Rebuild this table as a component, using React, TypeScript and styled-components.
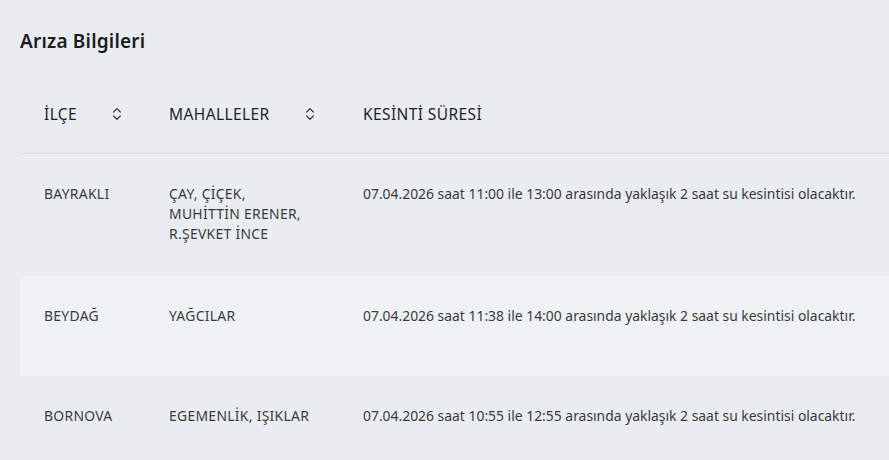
import React from "react";
import styled, { createGlobalStyle } from "styled-components";
import { ChevronsUpDown } from "lucide-react";

const Global = createGlobalStyle`
  html, body { margin: 0; padding: 0; background: #e9edf1; }
  body { font-family: "Noto Sans", "Open Sans", sans-serif; color: #2b2b2b; }
`;

const Page = styled.div`
  padding: 27px 0 0 20px;
  min-height: 460px;
  box-sizing: border-box;
  background: #e9edf1;
`;

const Title = styled.h1`
  margin: 0;
  font-size: 19px;
  line-height: 28px;
  font-weight: 600;
  letter-spacing: 0.2px;
  color: #1c1c1c;
`;

const Table = styled.div`
  margin-top: 19px;
  display: flex;
  flex-direction: column;
`;

const Row = styled.div<{ $header?: boolean; $alt?: boolean }>`
  display: grid;
  grid-template-columns: 125px 194px 1fr;
  padding-left: 24px;
  box-sizing: border-box;
  background: ${(p) => (p.$alt ? "#eff2f5" : "transparent")};
  ${(p) =>
    p.$header
      ? `height: 80px; align-items: center; border-bottom: 1px solid #d8dce1;`
      : `min-height: 100px; align-items: start; padding-top: 30px; padding-bottom: 32px;`}
`;

const HeadCell = styled.div`
  display: flex;
  align-items: center;
  font-size: 15.5px;
  font-weight: 400;
  letter-spacing: 0.4px;
  color: #1f1f1f;
`;

const HeadLabel = styled.span<{ $w?: number }>`
  width: ${(p) => (p.$w ? `${p.$w}px` : "auto")};
`;

const SortIcon = styled(ChevronsUpDown)`
  color: #333;
  flex: none;
`;

const Cell = styled.div<{ $caps?: boolean }>`
  font-size: 13.9px;
  line-height: 20px;
  color: #3a3a3a;
  letter-spacing: ${(p) => (p.$caps ? "0.3px" : "0")};
  padding-right: 10px;
`;

const rows = [
  {
    ilce: "BAYRAKLI",
    mah: ["ÇAY, ÇİÇEK,", "MUHİTTİN ERENER,", "R.ŞEVKET İNCE"],
    desc: "07.04.2026 saat 11:00 ile 13:00 arasında yaklaşık 2 saat su kesintisi olacaktır.",
  },
  {
    ilce: "BEYDAĞ",
    mah: ["YAĞCILAR"],
    desc: "07.04.2026 saat 11:38 ile 14:00 arasında yaklaşık 2 saat su kesintisi olacaktır.",
  },
  {
    ilce: "BORNOVA",
    mah: ["EGEMENLİK, IŞIKLAR"],
    desc: "07.04.2026 saat 10:55 ile 12:55 arasında yaklaşık 2 saat su kesintisi olacaktır.",
  },
];

export default function App() {
  return (
    <Page>
      <Global />
      <Title>Arıza Bilgileri</Title>
      <Table>
        <Row $header>
          <HeadCell>
            <HeadLabel $w={65}>İLÇE</HeadLabel>
            <SortIcon size={16} strokeWidth={1.8} />
          </HeadCell>
          <HeadCell>
            <HeadLabel $w={133}>MAHALLELER</HeadLabel>
            <SortIcon size={16} strokeWidth={1.8} />
          </HeadCell>
          <HeadCell>
            <HeadLabel>KESİNTİ SÜRESİ</HeadLabel>
          </HeadCell>
        </Row>
        {rows.map((r, i) => (
          <Row key={r.ilce} $alt={i === 1}>
            <Cell $caps>{r.ilce}</Cell>
            <Cell $caps>
              {r.mah.map((m) => (
                <div key={m}>{m}</div>
              ))}
            </Cell>
            <Cell>{r.desc}</Cell>
          </Row>
        ))}
      </Table>
    </Page>
  );
}
